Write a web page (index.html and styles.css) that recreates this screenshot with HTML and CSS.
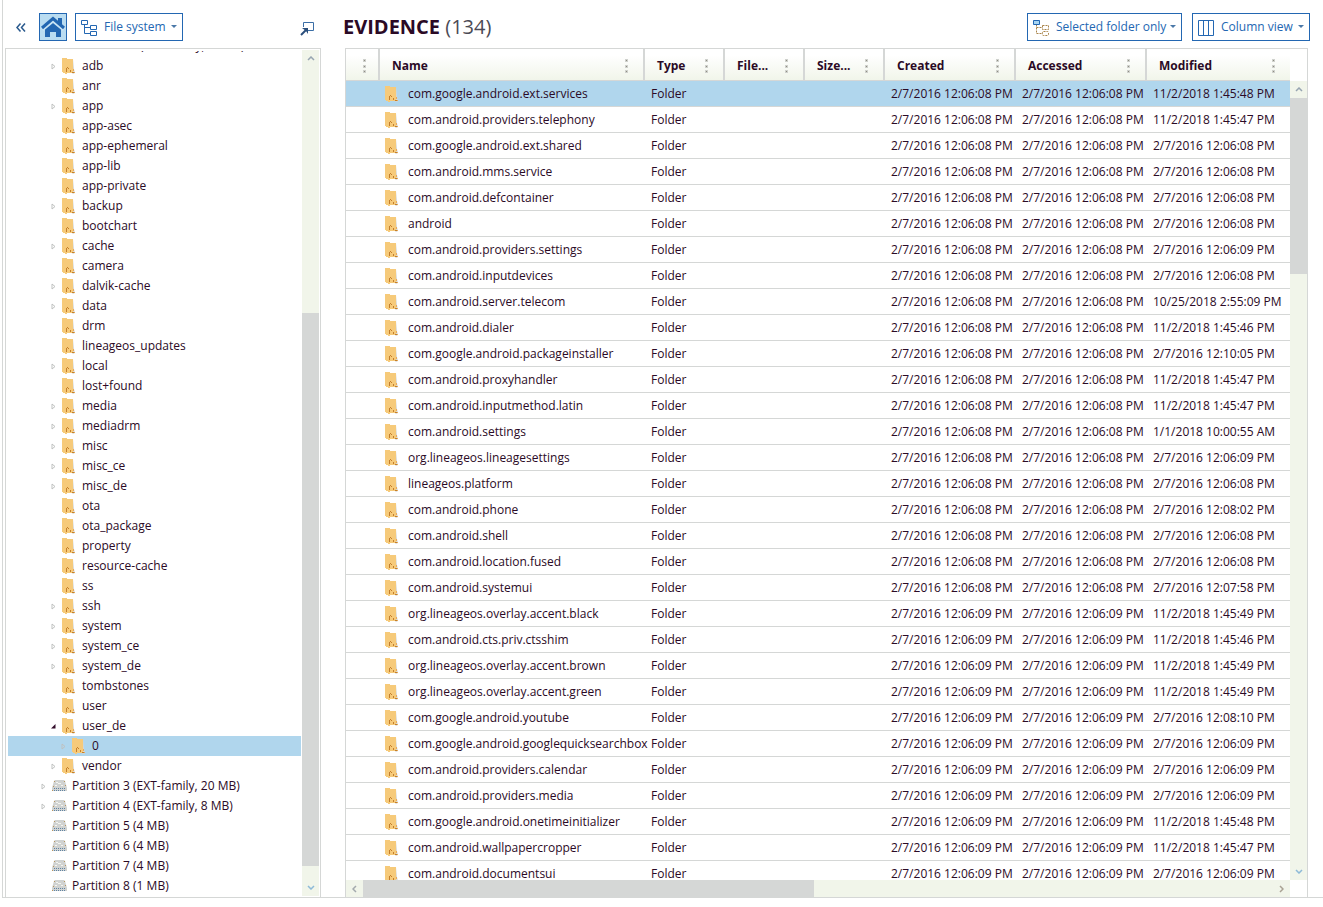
FILE: index.html
```html
<!DOCTYPE html>
<html lang="en">
<head>
<meta charset="utf-8">
<title>Evidence</title>
<link rel="stylesheet" href="styles.css">
</head>
<body>
<svg class="sprite" aria-hidden="true">
  <symbol id="i-folder" viewBox="0 0 14 18">
    <path d="M10 2h1l1 10 1 4-2 1-2-2z" fill="#d5d7d6"/>
    <path d="M0 1h5v1h6v14H5v1H3v-1H1v-1H0z" fill="#f6ca7a"/>
    <path d="M4 11h1v4H4zM5 10h1v1H5zM6 11h1v1H6zM8 13h1v2H8zM10 15h2v1h-2z" fill="#c47f2c"/>
    <path d="M11 12h1v2h-1zM12 15h1v1h-1z" fill="#e8a95a"/>
  </symbol>
  <symbol id="i-drive" viewBox="0 0 15 12">
    <path d="M3 0h9l1 1 2 7v3H0V8l2-7z" fill="#d0d2d1"/>
    <path d="M4 2h2v1H4zM6 3h3v1H6zM9 5h2v1H9zM3 5h2v1H3z" fill="#f4f5f1"/>
    <path d="M2 8h1v1H2zM4 8h1v1H4zM6 8h1v1H6zM8 8h1v1H8zM10 8h1v1h-1zM12 8h1v1h-1zM2 10h1v1H2zM4 10h1v1H4zM6 10h1v1H6zM8 10h1v1H8zM10 10h1v1h-1zM12 10h1v1h-1z" fill="#5f83a3"/>
    <path d="M0 10h1v1H0zM2 1h1v1H2zM1 6h1v1H1zM12 1h1v1h-1zM13 5h1v1h-1z" fill="#b7955f"/>
  </symbol>
  <symbol id="i-closed" viewBox="0 0 5 7"><path d="M1 1v5l3-2.500z" fill="none" stroke="#bfc1c0"/></symbol>
  <symbol id="i-open" viewBox="0 0 5 7"><path d="M4.500 1v4.500H0z" fill="#330d2b"/></symbol>
  <symbol id="i-caret" viewBox="0 0 6 4"><path d="M0 0h6L3 3z" fill="#4a78a8"/></symbol>
  <symbol id="i-up" viewBox="0 0 8 5"><path d="M1 4l3-3 3 3" fill="none" stroke="#97a5b1" stroke-width="1.500"/></symbol>
  <symbol id="i-down" viewBox="0 0 8 5"><path d="M1 1l3 3 3-3" fill="none" stroke="#8dbad8" stroke-width="1.500"/></symbol>
  <symbol id="i-left" viewBox="0 0 5 8"><path d="M4 1L1 4l3 3" fill="none" stroke="#a3a9ad" stroke-width="1.500"/></symbol>
  <symbol id="i-right" viewBox="0 0 5 8"><path d="M1 1l3 3-3 3" fill="none" stroke="#a9a294" stroke-width="1.500"/></symbol>
</svg>

<main class="app">
  <aside class="side">
    <header class="side-bar">
      <button class="plain collapse" aria-label="Collapse">
        <svg width="10" height="9" viewBox="0 0 10 9"><path d="M4.500 .5l-3.500 4 3.500 4M9 .5l-3.500 4 3.500 4" fill="none" stroke="#2a5a8e" stroke-width="1.500"/></svg>
      </button>
      <button class="home" aria-label="Home">
        <svg width="24" height="22" viewBox="0 0 24 22">
          <path d="M17 2h4v8l-4-3z" fill="#2367b2"/>
          <path d="M4 13l8-7 8 7v8h-5v-5H9v5H4z" fill="#2367b2"/>
          <path d="M1 13.500L12 4.500l11 9" fill="none" stroke="#c9e4f4" stroke-width="4"/>
          <path d="M1 12L12 2.500 23 12" fill="none" stroke="#2367b2" stroke-width="3"/>
        </svg>
      </button>
      <label class="combo combo-tree">
        <svg width="17" height="17" viewBox="0 0 17 17"><path d="M.5 1.500h6v4h-6zM3.500 5.500v9h6M3.500 8.500h6M9.500 6.500h6v4h-6zM9.500 12.500h6v4h-6z" fill="none" stroke="#2367b2"/></svg>
        <select aria-label="View source"><option>File system</option></select>
        <svg class="caret" width="6" height="4"><use href="#i-caret"/></svg>
      </label>
      <button class="plain popout" aria-label="Detach panel">
        <svg width="14" height="14" viewBox="0 0 14 14"><path d="M3.500 5V.5h10v8H8" fill="none" stroke="#3b6ea6"/><path d="M1 13l5-5" stroke="#2b4f7c" stroke-width="2"/><path d="M2 6h6v6L6 9z" fill="#2b4f7c"/></svg>
      </button>
    </header>
    <section class="tree-panel">
      <ul class="tree" id="tree"></ul>
      <div class="vbar tree-scroll">
        <button class="plain" aria-label="Scroll up"><svg width="8" height="5"><use href="#i-up"/></svg></button>
        <div class="thumb"></div>
        <button class="plain" aria-label="Scroll down"><svg width="8" height="5"><use href="#i-down"/></svg></button>
      </div>
    </section>
  </aside>

  <section class="content">
    <header class="content-bar">
      <h1>EVIDENCE <span>(134)</span></h1>
      <label class="combo combo-scope">
        <svg width="17" height="17" viewBox="0 0 17 17"><path d="M3.500 5.500v9h6M3.500 8.500h6M9.500 6.500h6v4h-6z" fill="none" stroke="#a98348" stroke-dasharray="2 1"/><rect x="9.500" y="12.500" width="6" height="4" rx="1" fill="none" stroke="#a98348" stroke-dasharray="2 1"/><path d="M.5 1.500h6v4h-6z" fill="#a8d5f2" stroke="#2367b2"/></svg>
        <select aria-label="Scope"><option>Selected folder only</option></select>
        <svg class="caret" width="6" height="4"><use href="#i-caret"/></svg>
      </label>
      <label class="combo combo-view">
        <svg width="17" height="17" viewBox="0 0 17 17"><path d="M.5 1.500h15v15H.5zM5.500 1.500v15M10.500 1.500v15" fill="none" stroke="#2367b2"/></svg>
        <select aria-label="View mode"><option>Column view</option></select>
        <svg class="caret" width="6" height="4"><use href="#i-caret"/></svg>
      </label>
    </header>
    <div class="grid">
      <div class="grid-view">
        <table>
          <colgroup><col class="c-mark"><col><col class="c-small"><col class="c-small"><col class="c-small"><col class="c-date"><col class="c-date"><col class="c-last"></colgroup>
          <thead><tr id="head"></tr></thead>
          <tbody id="rows"></tbody>
        </table>
      </div>
      <div class="grid-side">
        <div class="vbar grid-scroll">
          <button class="plain" aria-label="Scroll up"><svg width="8" height="5"><use href="#i-up"/></svg></button>
          <div class="thumb"></div>
          <button class="plain" aria-label="Scroll down"><svg width="8" height="5"><use href="#i-down"/></svg></button>
        </div>
      </div>
      <div class="hbar">
        <button class="plain" aria-label="Scroll left"><svg width="5" height="8"><use href="#i-left"/></svg></button>
        <div class="thumb"></div>
        <button class="plain" aria-label="Scroll right"><svg width="5" height="8"><use href="#i-right"/></svg></button>
      </div>
    </div>
  </section>
</main>
<script src="app.js"></script>
</body>
</html>
```
FILE: styles.css
```css
:root {
  --line: #d5d7d6;
  --track: #f1f5ea;
  --blue: #2367b2;
  --select: #b0d6ed;
  --ink: #2b0a26;
}

* { box-sizing: border-box; }

body {
  margin: 0;
  background: #fff;
  color: var(--ink);
  font: 12px/20px "Open Sans", "Noto Sans", sans-serif;
}

.sprite { display: none; }
svg { flex: none; display: block; }

.plain {
  display: flex;
  align-items: center;
  justify-content: center;
  margin: 0;
  padding: 0;
  border: 0;
  background: none;
}

.app {
  display: flex;
  height: calc(100vh - 9px);
  margin-left: 2px;
  border-left: 1px solid var(--line);
  border-bottom: 1px solid var(--line);
}

.side {
  display: flex;
  flex-direction: column;
  flex: none;
  width: 318px;
  padding-left: 2px;
}

.side-bar {
  display: flex;
  align-items: center;
  flex: none;
  height: 48px;
  padding: 6px 7px 0 10px;
}

.collapse { width: 12px; height: 20px; margin-right: 12px; }

.home {
  display: flex;
  align-items: center;
  justify-content: center;
  width: 28px;
  height: 28px;
  margin-right: 8px;
  padding: 0;
  border: 1px solid var(--blue);
  background: #b9dcf1;
}

.popout { margin: 4px 0 0 auto; }

.combo {
  display: flex;
  align-items: center;
  flex: none;
  height: 28px;
  padding: 0 5px;
  border: 1px solid var(--blue);
  color: var(--blue);
}

.combo select {
  flex: 1;
  min-width: 0;
  padding: 0 0 0 6px;
  border: 0;
  appearance: none;
  background: none;
  color: inherit;
  font: inherit;
}

.combo-tree { width: 108px; }
.combo-scope { width: 155px; }
.combo-view { width: 118px; }

.tree-panel {
  display: flex;
  flex: 1;
  min-height: 0;
  border: 1px solid var(--line);
  border-bottom: 0;
}

.tree {
  display: flex;
  flex-direction: column;
  justify-content: flex-end;
  flex: 1;
  min-width: 0;
  margin: 2px 1px 1px 2px;
  padding: 0;
  overflow: hidden;
  list-style: none;
}

.tree li {
  display: flex;
  align-items: center;
  flex: none;
  height: 20px;
  padding-left: 33px;
  white-space: nowrap;
}

.tree .level-2 { padding-left: 43px; }
.tree .level-3 { padding-left: 53px; }
.tree .selected { background: var(--select); }
.tree .twist { width: 11px; }
.tree .icon { width: 20px; }

.vbar {
  display: flex;
  flex-direction: column;
  flex: none;
  width: 17px;
  background: var(--track);
}

.vbar button, .hbar button { flex: none; width: 17px; height: 17px; }
.thumb { background: var(--line); }

.tree-scroll { margin: 1px 1px 1px 0; }
.tree-scroll .thumb { height: 65.4%; margin: auto 0 13px; }

.content {
  display: flex;
  flex-direction: column;
  flex: 1;
  min-width: 0;
  padding-left: 22px;
}

.content-bar {
  display: flex;
  align-items: center;
  gap: 10px;
  flex: none;
  height: 48px;
  padding: 6px 13px 0 0;
}

h1 {
  flex: 1;
  margin: 0;
  font-size: 20px;
  line-height: 28px;
  font-weight: 700;
}

h1 span { color: #4b4a55; font-weight: 400; }

.grid {
  display: grid;
  grid-template: minmax(0, 1fr) 17px / minmax(0, 1fr) 17px;
  flex: 1;
  min-height: 0;
  margin: 0 15px 0 2px;
  border: 1px solid var(--line);
  border-bottom: 0;
}

.grid-view { overflow: hidden; }

table {
  width: 100%;
  table-layout: fixed;
  border-spacing: 0;
}

.c-mark { width: 34px; }
.c-small { width: 80px; }
.c-date { width: 131px; }
.c-last { width: 143px; }

th {
  height: 32px;
  padding: 2px 15px 0 12px;
  border-right: 2px solid var(--line);
  border-bottom: 1px solid var(--line);
  background: linear-gradient(#fff 20%, var(--track));
  text-align: left;
}

th:first-child { padding-right: 12px; }
th:last-child { border-right: 0; }
th div { display: flex; align-items: center; justify-content: space-between; }

.dots { height: 14px; }

td {
  height: 26px;
  padding: 0 0 0 6px;
  border-bottom: 1px solid var(--line);
  line-height: 24px;
  white-space: nowrap;
}

td.name { padding-left: 5px; }
td.name div { display: flex; align-items: center; gap: 9px; }
tr.selected { background: var(--select); }

.grid-side { display: flex; padding-top: 32px; }
.grid-scroll .thumb { height: 22%; margin-bottom: auto; }

.hbar { display: flex; background: var(--track); }
.hbar .thumb { width: 47.8%; margin-right: auto; }
```
FILE: app.js
```js
const icon = (id, w, h) => `<svg width="${w}" height="${h}"><use href="#${id}"/></svg>`;

// Tree entries: "+" can be expanded, "-" is expanded.
const folders = "+adb anr +app app-asec app-ephemeral app-lib app-private +backup bootchart +cache camera +dalvik-cache +data drm lineageos_updates +local lost+found +media +mediadrm +misc +misc_ce +misc_de ota ota_package property resource-cache ss +ssh +system +system_ce +system_de tombstones user -user_de".split(" ");
const tree = [
  [1, "Partition 26 (EXT-family, 25 GB)"],
  ...folders.map(f => [2, f]),
  [3, "+0"],
  [2, "+vendor"],
  [1, "+Partition 3 (EXT-family, 20 MB)"],
  [1, "+Partition 4 (EXT-family, 8 MB)"],
  [1, "Partition 5 (4 MB)"],
  [1, "Partition 6 (4 MB)"],
  [1, "Partition 7 (4 MB)"],
  [1, "Partition 8 (1 MB)"],
];
document.getElementById("tree").innerHTML = tree.map(([level, text]) => {
  const mark = text[0] === "+" ? icon("i-closed", 5, 7) : text[0] === "-" ? icon("i-open", 5, 7) : "";
  const pic = level === 1 ? icon("i-drive", 15, 12) : icon("i-folder", 14, 18);
  return `<li class="level-${level}${level === 3 ? " selected" : ""}"><span class="twist">${mark}</span><span class="icon">${pic}</span>${text.replace(/^[+-]/, "")}</li>`;
}).join("");

const dots = `<button class="plain dots" aria-label="Column menu"><svg width="3" height="14" viewBox="0 0 3 14"><path d="M0 0h3v3H0zM0 6h3v3H0zM0 11h3v3H0z" fill="#cfd1cd"/><path d="M1 1h1v1H1zM1 7h1v1H1zM1 12h1v1H1z" fill="#8f8d80"/></svg></button>`;
document.getElementById("head").innerHTML = ["", "Name", "Type", "File...", "Size...", "Created", "Accessed", "Modified"]
  .map(t => `<th><div><span>${t}</span>${dots}</div></th>`).join("");

// Name, seconds of the created/accessed time, modified time.
const rows = `com.google.android.ext.services|08|11/2/2018 1:45:48 PM
com.android.providers.telephony|08|11/2/2018 1:45:47 PM
com.google.android.ext.shared|08|2/7/2016 12:06:08 PM
com.android.mms.service|08|2/7/2016 12:06:08 PM
com.android.defcontainer|08|2/7/2016 12:06:08 PM
android|08|2/7/2016 12:06:08 PM
com.android.providers.settings|08|2/7/2016 12:06:09 PM
com.android.inputdevices|08|2/7/2016 12:06:08 PM
com.android.server.telecom|08|10/25/2018 2:55:09 PM
com.android.dialer|08|11/2/2018 1:45:46 PM
com.google.android.packageinstaller|08|2/7/2016 12:10:05 PM
com.android.proxyhandler|08|11/2/2018 1:45:47 PM
com.android.inputmethod.latin|08|11/2/2018 1:45:47 PM
com.android.settings|08|1/1/2018 10:00:55 AM
org.lineageos.lineagesettings|08|2/7/2016 12:06:09 PM
lineageos.platform|08|2/7/2016 12:06:08 PM
com.android.phone|08|2/7/2016 12:08:02 PM
com.android.shell|08|2/7/2016 12:06:08 PM
com.android.location.fused|08|2/7/2016 12:06:08 PM
com.android.systemui|08|2/7/2016 12:07:58 PM
org.lineageos.overlay.accent.black|09|11/2/2018 1:45:49 PM
com.android.cts.priv.ctsshim|09|11/2/2018 1:45:46 PM
org.lineageos.overlay.accent.brown|09|11/2/2018 1:45:49 PM
org.lineageos.overlay.accent.green|09|11/2/2018 1:45:49 PM
com.google.android.youtube|09|2/7/2016 12:08:10 PM
com.google.android.googlequicksearchbox|09|2/7/2016 12:06:09 PM
com.android.providers.calendar|09|2/7/2016 12:06:09 PM
com.android.providers.media|09|2/7/2016 12:06:09 PM
com.google.android.onetimeinitializer|09|11/2/2018 1:45:48 PM
com.android.wallpapercropper|09|11/2/2018 1:45:47 PM
com.android.documentsui|09|2/7/2016 12:06:09 PM`.split("\n").map(r => r.split("|"));
document.getElementById("rows").innerHTML = rows.map(([name, sec, modified], i) => {
  const time = `<td>2/7/2016 12:06:${sec} PM</td>`;
  return `<tr${i ? "" : ' class="selected"'}><td></td><td class="name"><div>${icon("i-folder", 14, 18)}${name}</div></td><td>Folder</td><td></td><td></td>${time}${time}<td>${modified}</td></tr>`;
}).join("");
```
